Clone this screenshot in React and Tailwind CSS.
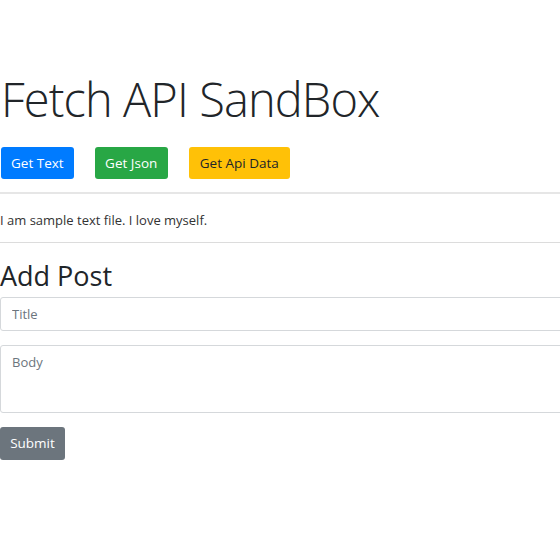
export default function App() {
  return (
    <div className="w-[560px] h-[560px] overflow-hidden bg-white text-[#212529]" style={{ fontFamily: '"Open Sans", sans-serif' }}>
      <div className="w-[620px] pt-[69px]">
        {/* Header */}
        <h1 className="text-[47px] font-light leading-[60px] tracking-[-0.9px] pl-[1px]">Fetch API SandBox</h1>

        <div className="flex gap-[21px] mt-[18px] pl-[1px]">
          <button className="h-[32px] px-[10px] rounded-[3px] bg-[#007bff] text-white text-[13.5px]">Get Text</button>
          <button className="h-[32px] px-[10.5px] rounded-[3px] bg-[#28a745] text-white text-[13.5px]">Get Json</button>
          <button className="h-[32px] px-[11px] rounded-[3px] bg-[#ffc107] text-[#212529] text-[13.5px]">Get Api Data</button>
        </div>

        <hr className="mt-[13px] border-t-2 border-[#e6e6e6]" />
        <p className="text-[13px] text-[#333] pt-[17px] pb-[13px] leading-[18px]">I am sample text file. I love myself.</p>
        <hr className="border-t border-[#dcdcdc]" />

        {/* Form */}
        <h2 className="text-[27px] leading-[34px] mt-[16px]">Add Post</h2>
        <form className="mt-[4px] flex flex-col">
          <input
            placeholder="Title"
            className="h-[34px] border border-[#d5d8db] rounded-[3px] px-[11px] text-[13px] placeholder:text-[#6c757d] outline-none"
          />
          <textarea
            placeholder="Body"
            className="mt-[14px] h-[68px] border border-[#d5d8db] rounded-[3px] px-[11px] py-[7px] text-[13px] placeholder:text-[#6c757d] outline-none resize-none"
          />
          <div className="mt-[14px]">
            <button type="button" className="h-[33px] w-[65px] rounded-[3px] bg-[#6c757d] text-white text-[13.5px]">Submit</button>
          </div>
        </form>
      </div>
    </div>
  );
}
